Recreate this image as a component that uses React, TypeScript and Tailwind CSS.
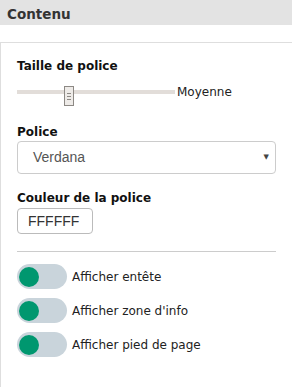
import React from "react";

function Toggle({ label }: { label: string }) {
  return (
    <div className="flex items-center h-[25px]">
      <div className="relative w-[50px] h-[25px] rounded-full bg-[#c9d4db]">
        <div className="absolute left-[2px] top-[3px] w-[20px] h-[20px] rounded-full bg-[#00976f]" />
      </div>
      <span className="ml-[5px] text-[12px] text-[#222]">{label}</span>
    </div>
  );
}

export default function App() {
  return (
    <div className="w-[292px] h-[387px] bg-white font-['DejaVu_Sans',sans-serif] overflow-hidden">
      <div className="h-[25px] bg-[#e3e3e3] pl-[7px] pt-[4px] text-[13.5px] font-bold text-[#333]">
        Contenu
      </div>
      <div className="mt-[17px] border-t border-l border-[#dedede] h-[400px] pl-4 pr-4 pt-[15px]">
        {/* Taille de police */}
        <div className="text-[12px] font-bold text-[#111] leading-[16px]">Taille de police</div>
        <div className="flex items-center h-[20px] mt-[8px]">
          <div className="relative w-[158px] h-[4px] bg-[#e2ddd9]">
            <div className="absolute left-[47px] top-[-4px] w-[10px] h-[20px] bg-[#eeebe8] border border-[#8d8985] flex flex-col items-center justify-center gap-[2px]">
              <div className="w-[4px] h-px bg-[#8d8985]" />
              <div className="w-[4px] h-px bg-[#8d8985]" />
              <div className="w-[4px] h-px bg-[#8d8985]" />
            </div>
          </div>
          <span className="ml-[2px] text-[12px] text-[#222]">Moyenne</span>
        </div>

        {/* Police */}
        <div className="mt-[22px] text-[12px] font-bold text-[#111] leading-[16px]">Police</div>
        <div className="mt-[1px] h-[33px] border border-[#ccc] rounded-[4px] flex items-center justify-between pl-[15px] pr-[6px]">
          <span className="font-['Liberation_Sans',sans-serif] text-[14px] text-[#555]">Verdana</span>
          <span className="text-[7px] text-[#444]">▼</span>
        </div>

        {/* Couleur */}
        <div className="mt-[16px] text-[12px] font-bold text-[#111] leading-[16px]">Couleur de la police</div>
        <div className="mt-[2px] w-[76px] h-[26px] border border-[#bbb] rounded-[4px] flex items-center pl-[10px] font-['Liberation_Sans',sans-serif] text-[14px] text-[#333]">
          FFFFFF
        </div>

        <div className="mt-[17px] h-px bg-[#ccc]" />

        <div className="mt-[12px] flex flex-col gap-[9px]">
          <Toggle label="Afficher entête" />
          <Toggle label="Afficher zone d'info" />
          <Toggle label="Afficher pied de page" />
        </div>
      </div>
    </div>
  );
}
